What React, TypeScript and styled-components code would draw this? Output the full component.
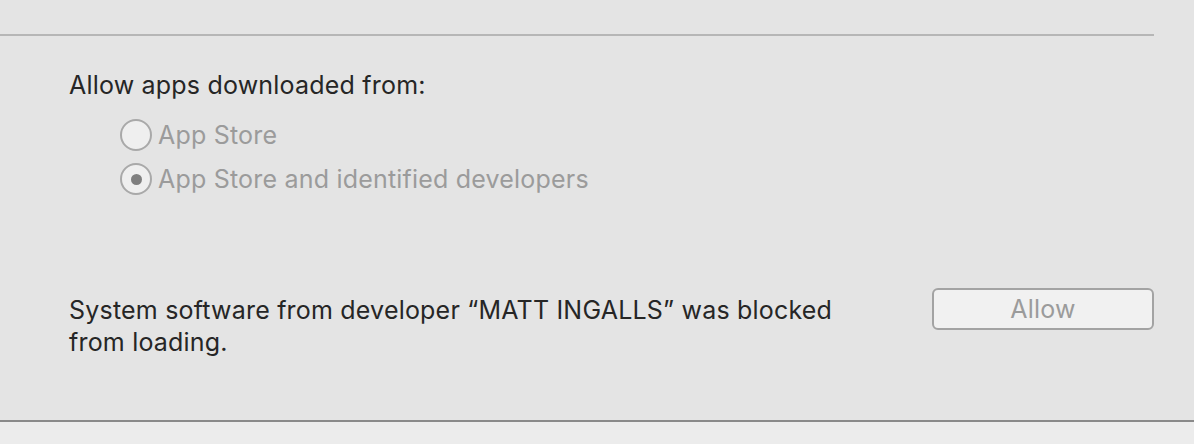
import styled, { createGlobalStyle } from "styled-components";

const GlobalStyle = createGlobalStyle`
  html, body {
    margin: 0;
    padding: 0;
    background: #e4e4e4;
  }
  body {
    font-family: Inter, "Liberation Sans", sans-serif;
  }
`;

const Page = styled.div`
  width: 1194px;
  height: 444px;
  display: flex;
  flex-direction: column;
  background: #e4e4e4;
  overflow: hidden;
`;

const TopRule = styled.div`
  margin-top: 34px;
  width: 1154px;
  height: 2px;
  background: #b6b6b6;
`;

const Section = styled.div`
  padding: 0 40px 0 69px;
  display: flex;
  flex-direction: column;
  font-size: 25px;
  letter-spacing: 0.2px;
`;

const Heading = styled.div`
  margin-top: 33px;
  line-height: 32px;
  color: #262626;
`;

const RadioList = styled.div`
  margin-top: 18px;
  margin-left: 51px;
  display: flex;
  flex-direction: column;
  gap: 12px;
`;

const RadioRow = styled.label`
  display: flex;
  align-items: center;
  gap: 6px;
  color: #9b9b9b;
  height: 32px;
`;

const Circle = styled.span<{ $checked?: boolean }>`
  box-sizing: border-box;
  width: 32px;
  height: 32px;
  border-radius: 50%;
  border: 2px solid #a9a9a9;
  background: #efefef;
  display: flex;
  align-items: center;
  justify-content: center;
  &::after {
    content: "";
    display: ${(p) => (p.$checked ? "block" : "none")};
    width: 11px;
    height: 11px;
    border-radius: 50%;
    background: #7f7f7f;
  }
`;

const BlockedRow = styled.div`
  margin-top: 99px;
  display: flex;
  justify-content: space-between;
  align-items: flex-start;
`;

const Message = styled.div`
  width: 820px;
  line-height: 32px;
  color: #262626;
`;

const AllowButton = styled.button`
  box-sizing: border-box;
  margin-top: -6px;
  width: 222px;
  height: 42px;
  border: 2px solid #a3a3a3;
  border-radius: 6px;
  background: #f1f1f1;
  color: #9b9b9b;
  font-family: inherit;
  font-size: 25px;
  letter-spacing: 0.2px;
  padding: 0;
`;

const Spacer = styled.div`
  flex: 1;
`;

const BottomRule = styled.div`
  height: 2px;
  background: #8a8a8a;
`;

const Footer = styled.div`
  height: 22px;
  background: #ececec;
`;

export default function App() {
  return (
    <Page>
      <GlobalStyle />
      <TopRule />
      <Section>
        <Heading>Allow apps downloaded from:</Heading>
        <RadioList>
          <RadioRow>
            <Circle />
            App Store
          </RadioRow>
          <RadioRow>
            <Circle $checked />
            App Store and identified developers
          </RadioRow>
        </RadioList>
        <BlockedRow>
          <Message>
            System software from developer “MATT INGALLS” was blocked
            <br />
            from loading.
          </Message>
          <AllowButton disabled>Allow</AllowButton>
        </BlockedRow>
      </Section>
      <Spacer />
      <BottomRule />
      <Footer />
    </Page>
  );
}
